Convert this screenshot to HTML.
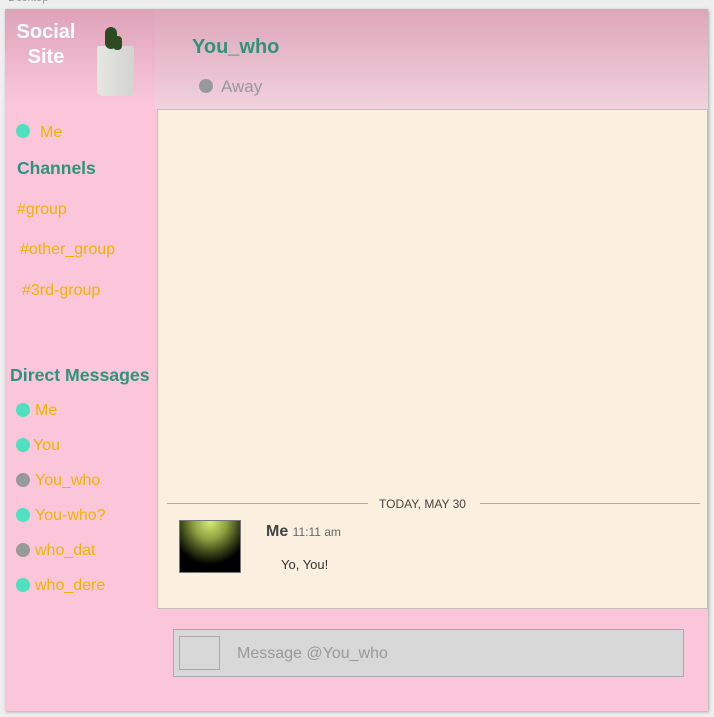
<!DOCTYPE html>
<html><head><style>
*{margin:0;padding:0;box-sizing:border-box}
body{width:714px;height:717px;background:#efefef;position:relative;overflow:hidden;font-family:"Liberation Sans",sans-serif}
.abs{position:absolute}
.dot{position:absolute;width:14px;height:14px;border-radius:50%}
.g{background:#4fe0c0}.x{background:#999}
.y{color:#f0b400;font-size:16px;position:absolute}
.h{color:#2e937a;font-weight:bold;font-size:18px;position:absolute}
</style></head><body>
<div class="abs" style="left:8px;top:-8px;font-size:11px;color:#999">Desktop</div>
<div class="abs" style="left:5px;top:9px;width:703px;height:702px;background:#fbc6da;box-shadow:1px 1px 3px rgba(0,0,0,.3)"></div>
<div class="abs" style="left:5px;top:9px;width:150px;height:100px;background:linear-gradient(#dea3b8,#fcc8dc)"></div>
<div class="abs" style="left:14px;top:20px;color:#fff;font-weight:bold;font-size:20px;text-align:center;line-height:25px;width:64px">Social<br>Site</div>
<div class="abs" style="left:97px;top:46px;width:37px;height:50px;background:linear-gradient(90deg,#e6e6e2,#d3d3cf);border-radius:2px 2px 6px 6px"></div>
<div class="abs" style="left:105px;top:27px;width:12px;height:22px;background:#2d4a24;border-radius:6px"></div>
<div class="abs" style="left:113px;top:36px;width:9px;height:14px;background:#2d4a24;border-radius:4px"></div>
<div class="abs" style="left:155px;top:9px;width:553px;height:100px;background:linear-gradient(#dea6b9,#f1d2de)"></div>
<div class="abs" style="left:192px;top:36px;color:#2e937a;font-weight:bold;font-size:20px">You_who</div>
<div class="dot x" style="left:199px;top:79px"></div>
<div class="abs" style="left:221px;top:77px;color:#999;font-size:17px">Away</div>
<div class="abs" style="left:157px;top:109px;width:551px;height:500px;background:#fbf0df;border:1px solid #c8c0b8"></div>
<div class="abs" style="left:167px;top:503px;width:201px;height:1px;background:#aaa"></div>
<div class="abs" style="left:480px;top:503px;width:220px;height:1px;background:#aaa"></div>
<div class="abs" style="left:379px;top:497px;font-size:12px;color:#444">TODAY, MAY 30</div>
<div class="abs" style="left:179px;top:520px;width:62px;height:53px;border:1px solid #777;background:radial-gradient(ellipse 70% 90% at 50% 0%,#d6f07a,#8ea040 40%,#3a4418 70%,#000 95%)"></div>
<div class="abs" style="left:266px;top:523px;font-size:16px;font-weight:bold;color:#444">Me <span style="font-size:12px;font-weight:normal;color:#666">11:11 am</span></div>
<div class="abs" style="left:281px;top:557px;font-size:13px;color:#333">Yo, You!</div>
<div class="abs" style="left:173px;top:629px;width:511px;height:48px;background:#d8d8d8;border:1px solid #aaa"></div>
<div class="abs" style="left:179px;top:636px;width:41px;height:34px;border:1px solid #aaa"></div>
<div class="abs" style="left:237px;top:645px;font-size:16px;color:#999">Message @You_who</div>
<div class="dot g" style="left:16px;top:124px"></div><div class="y" style="left:40px;top:124px">Me</div>
<div class="h" style="left:17px;top:158px;font-size:17.5px">Channels</div>
<div class="y" style="left:17px;top:201px">#group</div>
<div class="y" style="left:20px;top:241px">#other_group</div>
<div class="y" style="left:22px;top:282px">#3rd-group</div>
<div class="h" style="left:10px;top:365px;font-size:17.7px">Direct Messages</div>
<div class="dot g" style="left:16px;top:403px"></div><div class="y" style="left:35px;top:402px">Me</div>
<div class="dot g" style="left:16px;top:438px"></div><div class="y" style="left:33px;top:437px">You</div>
<div class="dot x" style="left:16px;top:473px"></div><div class="y" style="left:35px;top:472px">You_who</div>
<div class="dot g" style="left:16px;top:508px"></div><div class="y" style="left:35px;top:507px">You-who?</div>
<div class="dot x" style="left:16px;top:543px"></div><div class="y" style="left:35px;top:542px">who_dat</div>
<div class="dot g" style="left:16px;top:578px"></div><div class="y" style="left:35px;top:577px">who_dere</div>
</body></html>
